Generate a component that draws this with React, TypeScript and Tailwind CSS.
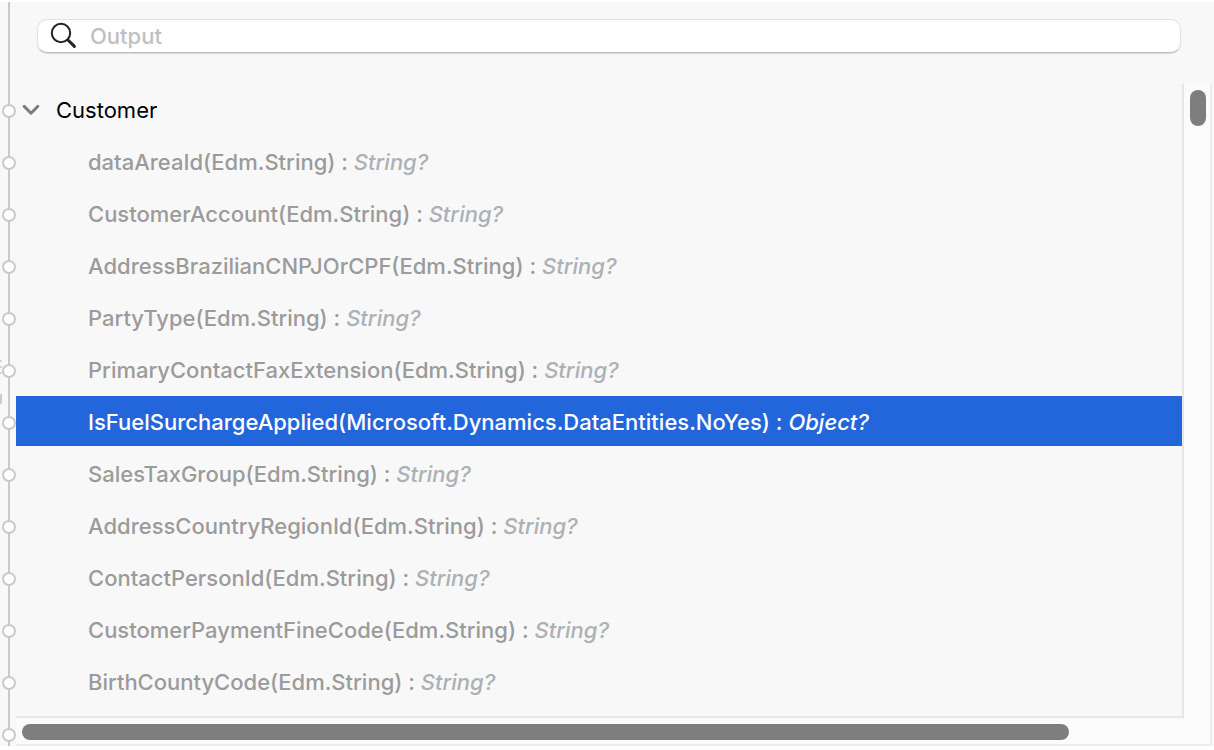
import { useState } from "react";

type Field = { name: string; type: string; result: string };

const fields: Field[] = [
  { name: "dataAreaId", type: "Edm.String", result: "String?" },
  { name: "CustomerAccount", type: "Edm.String", result: "String?" },
  { name: "AddressBrazilianCNPJOrCPF", type: "Edm.String", result: "String?" },
  { name: "PartyType", type: "Edm.String", result: "String?" },
  { name: "PrimaryContactFaxExtension", type: "Edm.String", result: "String?" },
  { name: "IsFuelSurchargeApplied", type: "Microsoft.Dynamics.DataEntities.NoYes", result: "Object?" },
  { name: "SalesTaxGroup", type: "Edm.String", result: "String?" },
  { name: "AddressCountryRegionId", type: "Edm.String", result: "String?" },
  { name: "ContactPersonId", type: "Edm.String", result: "String?" },
  { name: "CustomerPaymentFineCode", type: "Edm.String", result: "String?" },
  { name: "BirthCountyCode", type: "Edm.String", result: "String?" },
];

function Port() {
  return (
    <div className="flex h-[52px] shrink-0 items-center">
      <span className="size-3.5 rounded-full border-2 border-[#c9c9c9] bg-white" />
    </div>
  );
}

function PortRail() {
  return (
    <div className="relative w-4 shrink-0 overflow-hidden" aria-hidden="true">
      <div className="absolute inset-y-0 left-2 w-0.5 bg-[#c9c9c9]" />
      <div className="absolute top-[358px] left-0 flex w-0.5 flex-col gap-1">
        <span className="h-0.5 bg-[#d4d4d4]" />
        <span className="h-0.5 bg-[#d4d4d4]" />
        <span className="h-0.5 bg-[#d4d4d4]" />
      </div>
      <div className="absolute top-[392px] left-0 h-2.5 w-0.5 bg-[#c3ced4]" />
      <div className="absolute top-[83px] left-0.5 flex flex-col">
        {fields.map((f) => (
          <Port key={f.name} />
        ))}
        <Port />
        <Port />
      </div>
    </div>
  );
}

function SearchBar() {
  return (
    <label className="mr-[33px] ml-[21px] flex h-[34px] items-center rounded-[10px] border border-[#e2e2e2] border-b-[#bdbdbd] bg-white pl-3 shadow-[0_1px_1px_rgba(0,0,0,0.12)]">
      <svg viewBox="0 0 28 28" className="size-7 shrink-0" fill="none" stroke="#222" strokeLinecap="round" aria-hidden="true">
        <circle cx="11" cy="11" r="9.2" strokeWidth="2" />
        <path d="M17.6 17.6 L19 19" strokeWidth="2" />
        <path d="M18.8 18.8 L24.4 24.4" strokeWidth="3" />
      </svg>
      <input
        type="text"
        aria-label="Output"
        placeholder="Output"
        className="ml-3 h-full min-w-0 flex-1 bg-transparent text-[22px] font-[450] text-black outline-none placeholder:text-[#c0c0c0]"
      />
    </label>
  );
}

export default function App() {
  const [open, setOpen] = useState(true);
  const [selected, setSelected] = useState("IsFuelSurchargeApplied");

  return (
    <main className="flex border-t-2 border-white bg-[#f8f8f8] font-['Inter',sans-serif] text-[22px] leading-[26px]">
      <PortRail />
      <div className="flex min-w-0 flex-1 flex-col pt-[17px]">
        <SearchBar />
        <div className="mt-[31px] mr-0.5 grid grid-cols-[minmax(0,1fr)_26px] grid-rows-[1fr_26px] border-r-2 border-b-2 border-[#ececec] bg-[#fbfbfb]">
          <div className="min-h-[634px] overflow-hidden border-r-2 border-b-2 border-[#e6e6e6] bg-[#f8f8f8]">
            <button
              type="button"
              aria-expanded={open}
              onClick={() => setOpen(!open)}
              className="flex h-[52px] w-full items-center pl-1.5 text-left text-black"
            >
              <svg viewBox="0 0 18 12" className="h-3 w-[18px]" fill="none" stroke="#7d7d7d" strokeWidth="3" strokeLinecap="round" strokeLinejoin="round" aria-hidden="true">
                <path d="M2.2 2.4 L9 9.2 L15.8 2.4" />
              </svg>
              <span className="ml-4">Customer</span>
            </button>
            {open && (
              <ul>
                {fields.map((f) => {
                  const active = f.name === selected;
                  return (
                    <li key={f.name} className="pb-0.5">
                      <button
                        type="button"
                        aria-pressed={active}
                        onClick={() => setSelected(f.name)}
                        className={
                          active
                            ? "flex h-[50px] w-full items-center bg-[#2365da] pt-0.5 pl-[72px] font-[450] whitespace-pre text-white"
                            : "flex h-[50px] w-full items-center pt-0.5 pl-[72px] font-[450] whitespace-pre text-[#9b9b9b]"
                        }
                      >
                        <span>{`${f.name}(${f.type}) : `}</span>
                        <em className={active ? "font-medium text-white" : "font-medium text-[#abb1b5]"}>{f.result}</em>
                      </button>
                    </li>
                  );
                })}
              </ul>
            )}
          </div>
          <div className="flex flex-col items-end pt-1.5 pr-1">
            <div className="h-9 w-4 rounded-full bg-[#7e7e7e]" />
          </div>
          <div className="flex items-end pr-[115px] pb-1 pl-1.5">
            <div className="h-4 flex-1 rounded-full bg-[#7e7e7e]" />
          </div>
        </div>
      </div>
    </main>
  );
}
